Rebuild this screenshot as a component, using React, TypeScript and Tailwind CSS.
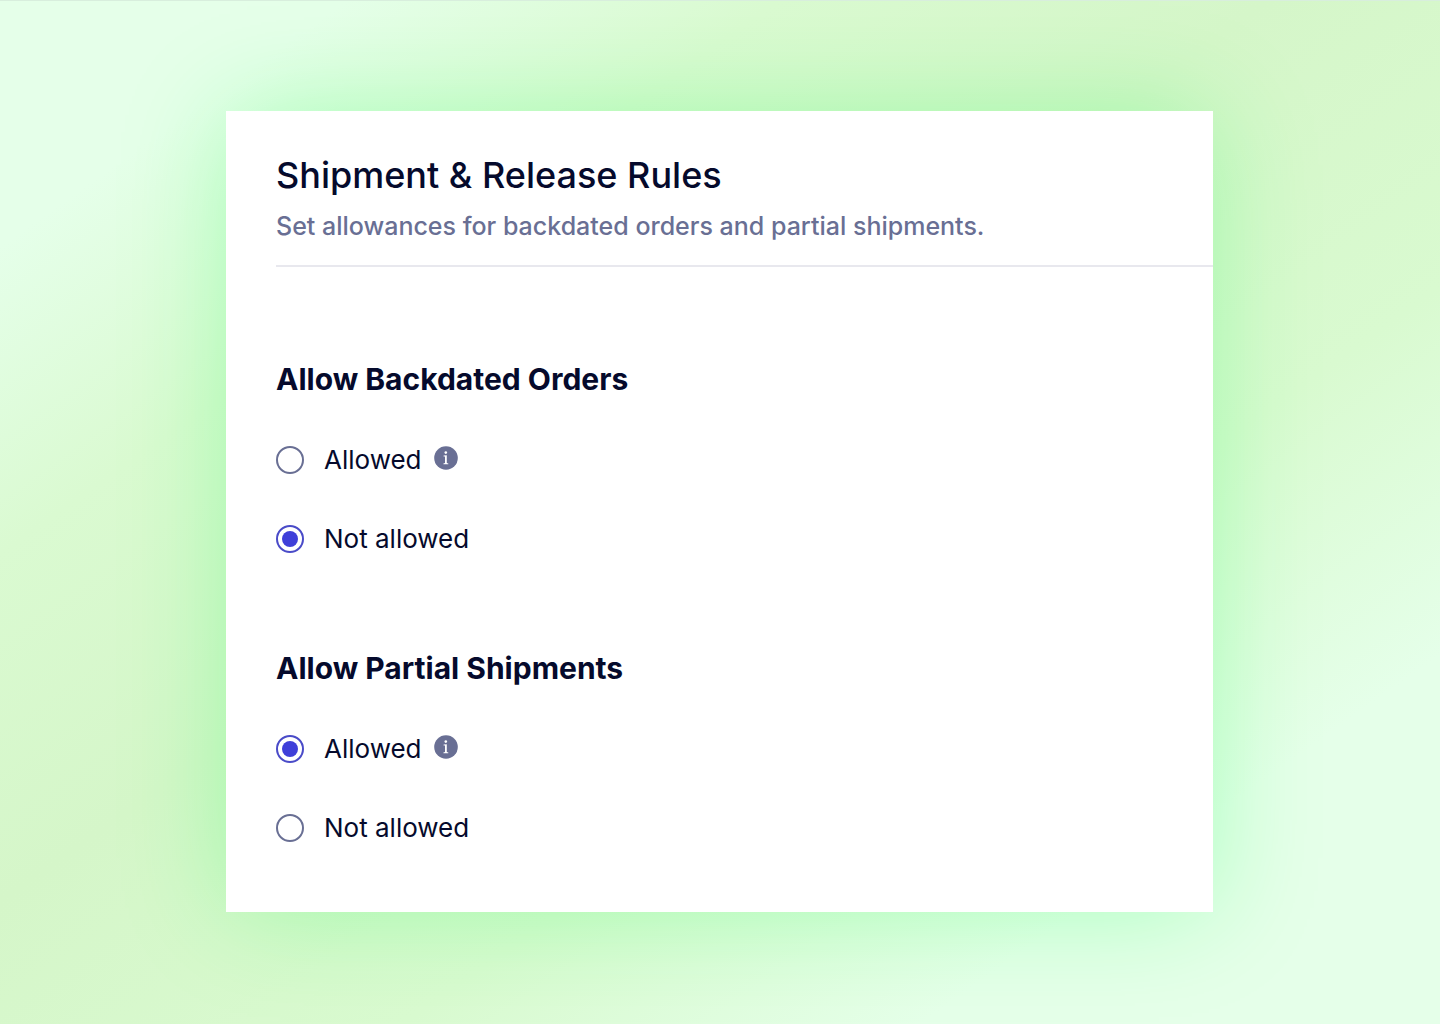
import React, { useState } from 'react';

type Permission = 'allowed' | 'not-allowed';

interface PermissionGroupProps {
  name: string;
  title: string;
  value: Permission;
  onChange: (value: Permission) => void;
}

const options: { value: Permission; label: string; hasInfo: boolean }[] = [
  { value: 'allowed', label: 'Allowed', hasInfo: true },
  { value: 'not-allowed', label: 'Not allowed', hasInfo: false },
];

const InfoIcon = () => (
  <svg viewBox="0 0 24 24" className="size-6 shrink-0" aria-hidden="true">
    <circle cx="12" cy="12" r="11.8" fill="#696f94" />
    <circle cx="11.8" cy="6.6" r="1.3" fill="#fff" />
    <path
      d="M9.6 9.5 L12.8 9.2 V17 L14.3 17.4 V18.2 H9.4 V17.4 L11 17 V10.6 L9.6 10.4 Z"
      fill="#fff"
    />
  </svg>
);

const PermissionGroup: React.FC<PermissionGroupProps> = ({ name, title, value, onChange }) => (
  <fieldset>
    <legend className="mb-[43px] text-[30px] leading-10 font-bold">{title}</legend>
    <div className="flex flex-col gap-[43px]">
      {options.map((option) => {
        const id = `${name}-${option.value}`;
        return (
          <div key={option.value} className="flex h-9 items-center">
            <input
              type="radio"
              id={id}
              name={name}
              checked={value === option.value}
              onChange={() => onChange(option.value)}
              className="
                size-7 shrink-0 appearance-none rounded-full
                border-2 border-[#696f94] bg-clip-content p-1
                checked:border-[#4a4bc8] checked:bg-[#3f3fd9]
              "
            />
            <label htmlFor={id} className="pl-5 text-[26px] leading-9">
              {option.label}
            </label>
            {option.hasInfo && (
              <span className="pb-1 pl-3">
                <InfoIcon />
              </span>
            )}
          </div>
        );
      })}
    </div>
  </fieldset>
);

export default function App() {
  const [backdated, setBackdated] = useState<Permission>('not-allowed');
  const [partial, setPartial] = useState<Permission>('allowed');

  return (
    <div className="min-h-screen border-t border-[#d8eedd] bg-[linear-gradient(to_bottom_right,#e5ffe9_12%,#dafad1_27%,#d5f6c9_44%,#d9fad0_64%,#e5ffe9_82%)] pt-[110px] pr-[227px] pb-28 pl-[226px] font-['Inter',sans-serif] text-[#050a2c]">
      <main className="bg-white pt-10 pb-[66px] pl-[50px] shadow-[0_0_100px_-4px_rgba(0,255,70,0.27)]">
        <header className="border-b-2 border-[#e8e8ee] pb-[21px]">
          <h1 className="text-[36px] leading-12 font-medium">Shipment &amp; Release Rules</h1>
          <p className="mt-[9px] text-[25px] leading-9 font-medium text-[#696f94]">
            Set allowances for backdated orders and partial shipments.
          </p>
        </header>
        <div className="flex flex-col gap-[91px] pt-[92px]">
          <PermissionGroup
            name="backdated"
            title="Allow Backdated Orders"
            value={backdated}
            onChange={setBackdated}
          />
          <PermissionGroup
            name="partial"
            title="Allow Partial Shipments"
            value={partial}
            onChange={setPartial}
          />
        </div>
      </main>
    </div>
  );
}
